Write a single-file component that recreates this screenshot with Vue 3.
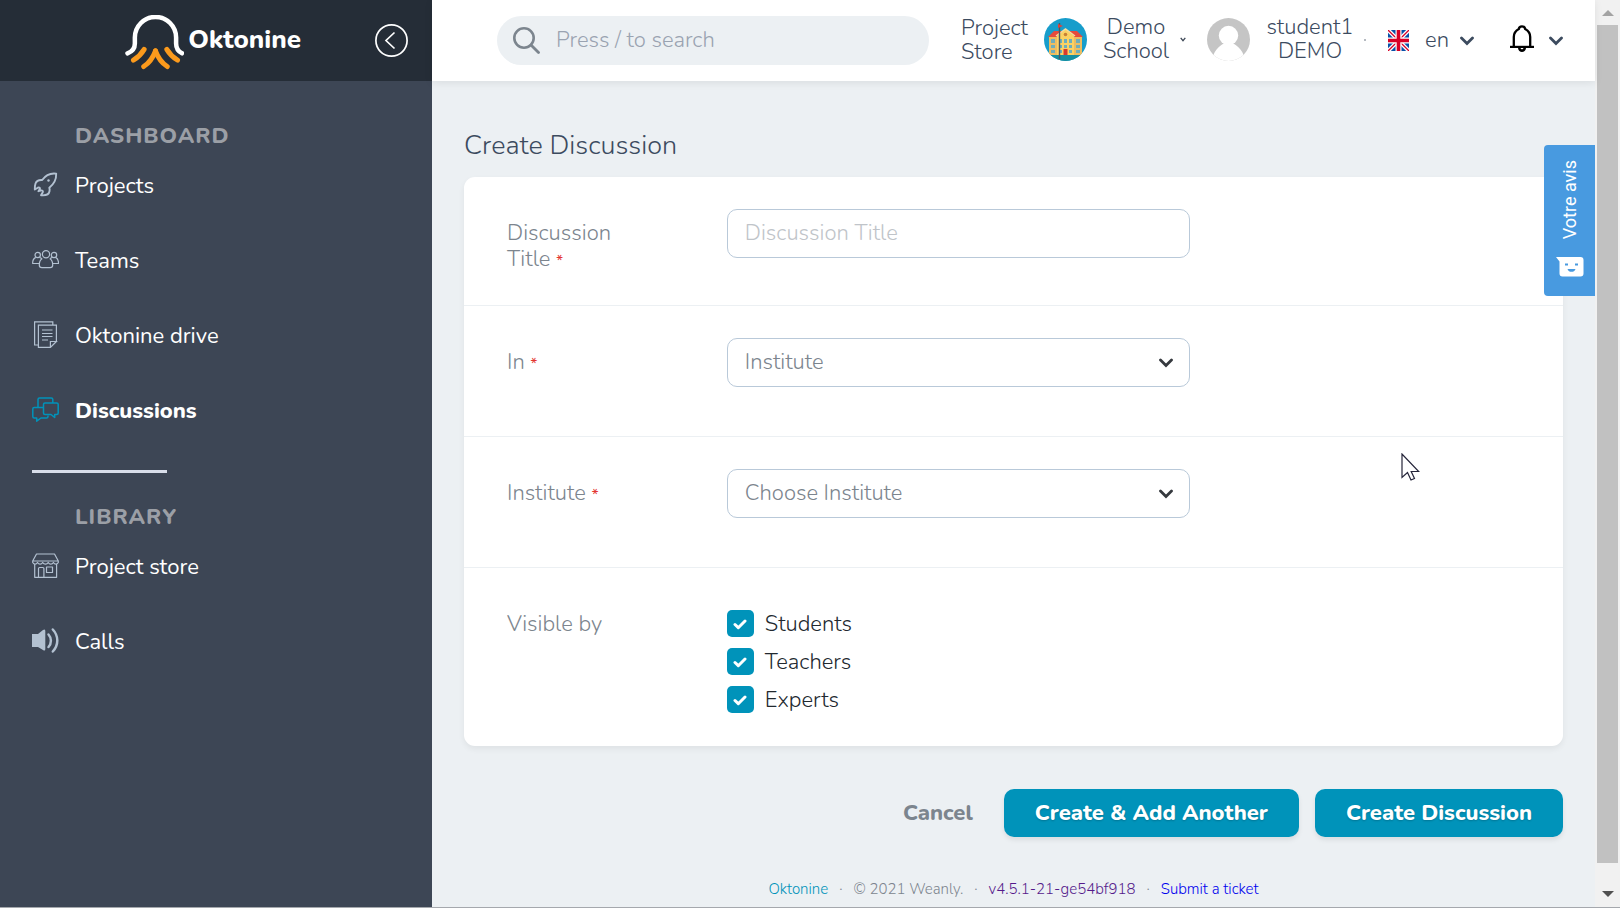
<script setup>
import { ref } from 'vue'

const dashboard = [
  { label: 'Projects', icon: 'rocket' },
  { label: 'Teams', icon: 'team' },
  { label: 'Oktonine drive', icon: 'docs' },
  { label: 'Discussions', icon: 'chat', active: true },
]
const library = [
  { label: 'Project store', icon: 'store' },
  { label: 'Calls', icon: 'sound' },
]
const search = ref('')
const title = ref('')
const scope = ref('Institute')
const institute = ref('')
const audiences = ref([
  { label: 'Students', on: true },
  { label: 'Teachers', on: true },
  { label: 'Experts', on: true },
])
</script>

<template>
  <div class="app">
    <svg class="sprite" aria-hidden="true">
      <symbol id="rocket" viewBox="0 0 27 27">
        <path d="M24.200 2.600c-6-.8-10.500 1.400-14 6.400-4-.3-5.800 1-6.700 3.500-.5 1.500-.8 3.500-.7 6l3-1.800c1.200-.5 2.300-.1 2.200 1.100l-1.600 2.400 2.400-.7c1.400-.4 2.500.5 2 1.700l-1.800 3.100c5 .5 7.900-.8 8.500-4 .3-1.500.2-2.600-.2-3.600C22 13 24.400 8.600 24.200 2.600z" fill="none" stroke="currentColor" stroke-width="1.900" stroke-linejoin="round" />
        <circle cx="16.500" cy="9.500" r="1.200" fill="currentColor" />
      </symbol>
      <symbol id="team" viewBox="0 0 27 27">
        <g fill="none" stroke="currentColor" stroke-width="1.200" stroke-linejoin="round">
          <circle cx="14" cy="8.200" r="3.600" /><circle cx="5.700" cy="9" r="2.700" /><circle cx="22" cy="9" r="2.700" />
          <path d="M10.300 12.600c-2.100 1.200-3 3.400-3 6.400 0 1.700 1 2.600 2.600 2.600h8.200c1.600 0 2.600-.9 2.600-2.600 0-3-.9-5.200-3-6.400M7.300 17.500H.7c-.2-3 .8-5 3.100-6.100M7.700 11.400l2 1.200M20.700 17.500h5.800c.1-3-.8-5-3-6.100M20 11.400l-1.800 1.200" />
        </g>
      </symbol>
      <symbol id="docs" viewBox="0 0 27 27">
        <g fill="none" stroke="currentColor" stroke-width="1.200">
          <path d="M6 24H2.600V.8h18.200v3.400M24.400 20.500V4.200H6.400v22.200h12l6-5.900h-6v5.900" />
          <path d="M10 9h10.500M10 12.500h10.500M10 15.500h10.500M10 19h6" />
        </g>
      </symbol>
      <symbol id="chat" viewBox="0 0 27 27">
        <g fill="none" stroke="currentColor" stroke-width="1.500" stroke-linejoin="round">
          <path d="M6 11V3.500Q6 2 7.500 2h11.800q1.500 0 1.500 1.500V7M11 11.500H2.200Q.8 11.500.8 13v7.500q0 1.500 1.400 1.500h2.500v3.200L9 22h5.500q1.500 0 1.500-1.500v-1" />
          <path d="M13 7h11.700q1.500 0 1.500 1.500v8.500q0 1.500-1.500 1.500h-2v3L19 18.500h-6q-1.500 0-1.500-1.500V8.500Q11.500 7 13 7z" />
        </g>
      </symbol>
      <symbol id="store" viewBox="0 0 27 27">
        <g fill="none" stroke="currentColor" stroke-width="1.200" stroke-linejoin="round">
          <path d="M4.500 2h18l3.800 7H.7zM.7 9v1.500c1.300 2.200 3.500 2.200 4.800 0 1.300 2.200 3.900 2.200 5.200 0 1.300 2.200 4.200 2.200 5.500 0 1.300 2.200 3.900 2.200 5.200 0 1.300 2.200 3.600 2.200 4.900 0V9M2.700 12.300v13h21.900v-13M6.500 25V16.500q0-1 1-1h3.400q1 0 1 1V25M14.500 15h6v5.500h-6z" />
        </g>
      </symbol>
      <symbol id="sound" viewBox="0 0 27 27">
        <path d="M0 7h6L11 3Q13.300 1.500 13.300 4v18q0 2.500-2.300 1L6 20H0z" fill="currentColor" />
        <path d="M16.500 7.500c3.200 3.500 3.200 9 0 12.500M20.800 2.500c6 6.500 6 15.500 0 22" fill="none" stroke="currentColor" stroke-width="2.500" stroke-linecap="round" />
      </symbol>
      <symbol id="chevron" viewBox="0 0 14 10">
        <path d="M1.500 2 7 7.500 12.500 2" fill="none" stroke="currentColor" stroke-width="2.800" stroke-linecap="round" />
      </symbol>
    </svg>

    <aside class="sidebar">
      <div class="brand">
        <a class="logo" href="#">
          <svg width="59" height="55" viewBox="0 0 60 56" aria-hidden="true">
            <path d="M2.500 39C8 37 10 34 10 29V23a21 21 0 0 1 42 0v6c0 5 2 8 6 10" fill="none" stroke="#fff" stroke-width="4.600" stroke-linecap="round" />
            <g fill="none" stroke="#fb9a1c" stroke-width="5" stroke-linecap="round">
              <path d="M19.500 35c-3 5-6 8-11 11" /><path d="M42.500 35c3 5 6 8 11 11" />
              <path d="M31 36.500c-2.500 7-6 12-12 16" /><path d="M31 36.500c2.500 7 6 12 12 16" />
            </g>
          </svg>
          <span>Oktonine</span>
        </a>
        <button class="collapse" aria-label="Collapse menu">
          <svg width="33" height="33" viewBox="0 0 33 33"><circle cx="16.500" cy="16.500" r="15.600" fill="none" stroke="#fff" stroke-width="1.700" /><path d="M19.500 8.500 11 16.500l8.500 8" fill="none" stroke="#fff" stroke-width="1.700" /></svg>
        </button>
      </div>
      <nav>
        <h2>Dashboard</h2>
        <a v-for="item in dashboard" :key="item.label" href="#" :class="{ active: item.active }">
          <svg width="27" height="27"><use :href="'#' + item.icon" /></svg><span>{{ item.label }}</span>
        </a>
        <hr>
        <h2>Library</h2>
        <a v-for="item in library" :key="item.label" href="#">
          <svg width="27" height="27"><use :href="'#' + item.icon" /></svg><span>{{ item.label }}</span>
        </a>
      </nav>
    </aside>

    <div class="page">
      <header>
        <label class="search">
          <svg width="27" height="27" viewBox="0 0 27 27" aria-hidden="true"><circle cx="11" cy="11" r="9.700" fill="none" stroke="#7c858e" stroke-width="2.600" /><path d="m18 18 7.500 7.500" stroke="#7c858e" stroke-width="2.800" stroke-linecap="round" /></svg>
          <input v-model="search" type="search" placeholder="Press / to search" aria-label="Search">
        </label>
        <a class="store-link" href="#">Project Store</a>
        <button class="account school">
          <svg width="43" height="43" viewBox="0 0 43 43" aria-hidden="true">
            <defs><clipPath id="disc"><circle cx="21.500" cy="21.500" r="21.500" /></clipPath></defs>
            <g clip-path="url(#disc)">
              <path d="M0 0h43v43H0z" fill="#179dcb" /><path d="M3 37h37v6H3z" fill="#168fa0" />
              <path d="M4 19 10 13h23l6 6z" fill="#e64b3c" />
              <path d="M5 19h33v18H5z" fill="#edbd61" /><path d="M13 18l8.500-7 8.500 7v19H13z" fill="#fbd263" />
              <path d="m12 18 9.500-7 9.500 7" fill="none" stroke="#f4dda0" stroke-width="1.500" />
              <path d="M7 21h4v4H7zm0 6h4v3H7zm0 5h4v3H7zm8-11h3v4h-3zm5 0h3v4h-3zm5 0h3v4h-3zm7 0h4v4h-4zM15 27h3v3h-3zm5 0h3v3h-3zm5 0h3v3h-3zm7 0h4v3h-4zm-17 5h3v3h-3zm10 0h3v3h-3zm7 0h4v3h-4z" fill="#6faeba" />
              <circle cx="21.500" cy="16.500" r="1.800" fill="#c88135" /><path d="M19.500 31h4v6h-4z" fill="#d53b2f" />
              <path d="M15.500 5v36" stroke="#4b5962" stroke-width="1.400" /><path d="m14 6 5 2-5 2z" fill="#e14237" />
            </g>
          </svg>
          <span>Demo School</span>
          <svg width="6" height="5" viewBox="0 0 6 5"><path d="m.7.900 2.300 2.800L5.300.900" fill="none" stroke="#3c4655" stroke-width="1.300" /></svg>
        </button>
        <button class="account user">
          <svg width="43" height="43" viewBox="0 0 43 43" aria-hidden="true">
            <defs><clipPath id="face"><circle cx="21.500" cy="21.500" r="21.500" /></clipPath></defs>
            <g clip-path="url(#face)"><path d="M0 0h43v43H0z" fill="#c5c5c5" /><circle cx="21.500" cy="17.500" r="9.700" fill="#fff" /><path d="M5 43C6 33 12 28 17.500 25h8C31 28 37 33 38 43z" fill="#fff" /></g>
          </svg>
          <span>student1 DEMO</span>
          <i class="dot"></i>
        </button>
        <button class="lang">
          <svg width="21" height="21" viewBox="0 0 21 21" aria-hidden="true">
            <path d="M0 0h21v21H0z" fill="#0750a8" /><path d="m0 0 21 21M21 0 0 21" stroke="#fff" stroke-width="4" /><path d="m0 0 21 21M21 0 0 21" stroke="#d80027" stroke-width="1.300" />
            <path d="M10.500 0v21M0 10.500h21" stroke="#fff" stroke-width="6" /><path d="M10.500 0v21M0 10.500h21" stroke="#d80027" stroke-width="3.600" />
          </svg>
          <span>en</span>
          <svg width="14" height="10"><use href="#chevron" /></svg>
        </button>
        <button class="alerts" aria-label="Notifications">
          <svg class="bell" width="24" height="28" viewBox="0 0 24 28" aria-hidden="true"><path d="M3.800 21V12C3.800 7 7 5 8.800 4 9 2.200 10.300 1.300 12 1.300s3 .9 3.200 2.700c1.800 1 5 3 5 8v9" fill="none" stroke="#000" stroke-width="2.300" /><path d="M0 20.800h24V23H0z" /><path d="M8 23c.4 5.300 7.600 5.300 8 0h-2.500c-.5 1.700-2.500 1.700-3 0z" /></svg>
          <svg width="14" height="10"><use href="#chevron" /></svg>
        </button>
      </header>

      <main>
        <h1>Create Discussion</h1>
        <form @submit.prevent>
          <div class="card">
            <div class="row">
              <label for="title">Discussion Title <b>*</b></label>
              <div class="field"><input id="title" v-model="title" type="text" placeholder="Discussion Title"></div>
            </div>
            <div class="row tall">
              <label for="scope">In <b>*</b></label>
              <div class="field">
                <select id="scope" v-model="scope"><option>Institute</option></select>
                <svg width="14" height="10"><use href="#chevron" /></svg>
              </div>
            </div>
            <div class="row tall">
              <label for="institute">Institute <b>*</b></label>
              <div class="field">
                <select id="institute" v-model="institute"><option value="">Choose Institute</option></select>
                <svg width="14" height="10"><use href="#chevron" /></svg>
              </div>
            </div>
            <div class="row" role="group" aria-labelledby="visible">
              <span id="visible" class="caption">Visible by</span>
              <div class="checks">
                <label v-for="a in audiences" :key="a.label">
                  <span class="box">
                    <input v-model="a.on" type="checkbox">
                    <svg v-if="a.on" width="14" height="12" viewBox="0 0 14 12"><path d="m2 6.500 3.300 3.200L12 3" fill="none" stroke="#fff" stroke-width="3" stroke-linecap="round" stroke-linejoin="round" /></svg>
                  </span>{{ a.label }}
                </label>
              </div>
            </div>
          </div>
          <div class="actions">
            <button type="button" class="cancel">Cancel</button>
            <button type="button" class="primary">Create &amp; Add Another</button>
            <button type="submit" class="primary">Create Discussion</button>
          </div>
        </form>
        <footer>
          <a class="home" href="#">Oktonine</a><span>·</span><span>© 2021 Weanly.</span><span>·</span><a class="version" href="#">v4.5.1-21-ge54bf918</a><span>·</span><a class="ticket" href="#">Submit a ticket</a>
        </footer>
      </main>

      <button class="feedback">
        <span>Votre avis</span>
        <svg width="28" height="20" viewBox="0 0 28 20" aria-hidden="true"><path d="M0 0h24.500Q27.500 0 27.500 3v13.500q0 3-3 3H6.500q-3 0-3-3V4.500z" fill="#fff" /><path d="M9 6.500h3v2H9zm10 0h3v2h-3zM11.500 12h8c-1 3.800-7 3.800-8 0z" fill="#489ae0" /></svg>
      </button>
    </div>

    <div class="scrollbar" aria-hidden="true">
      <svg width="12" height="6" viewBox="0 0 12 6"><path d="m0 6 6-6 6 6z" fill="#a3a3a3" /></svg>
      <div class="thumb"></div>
      <svg width="12" height="6" viewBox="0 0 12 6"><path d="m0 0 6 6 6-6z" fill="#505050" /></svg>
    </div>

    <svg class="pointer" width="19" height="29" viewBox="0 0 19 29" aria-hidden="true"><path d="M1 1v23.500l5.500-5L10 27l3.500-1.500-3.300-7h7.500z" fill="#fff" stroke="#25253a" stroke-width="1.200" /></svg>
  </div>
</template>

<style>
body { margin: 0; }
</style>

<style scoped>
.app {
  position: relative;
  display: flex;
  min-height: 100vh;
  box-sizing: border-box;
  border-bottom: 1px solid #a5a8ad;
  background: #ecf0f3;
  color: #3c4b5f;
  font: 300 22px/24px Nunito, Lato, "Noto Sans", sans-serif;
}
.app *, .app *::before { box-sizing: border-box; }
.sprite { position: absolute; width: 0; height: 0; }
svg { flex: none; display: block; }
a { color: inherit; text-decoration: none; }
button { padding: 0; border: 0; background: none; color: inherit; font: inherit; cursor: pointer; }
input, select { font: inherit; color: inherit; }

.sidebar { flex: none; width: 432px; background: #3d4655; color: #fff; }
.brand { display: flex; align-items: center; justify-content: flex-end; gap: 74px; height: 81px; padding-right: 24px; background: #252d37; }
.logo { display: flex; align-items: center; gap: 4px; font-size: 26px; font-weight: 800; }
.logo svg { margin-top: 3px; }
.logo span { padding-bottom: 2px; }
nav { padding: 42px 32px 0; }
nav h2 { margin: 0 0 21px 43px; font-size: 22px; line-height: 27px; font-weight: 800; letter-spacing: 1px; text-transform: uppercase; color: #9b9fa6; }
nav a { display: flex; align-items: center; gap: 16px; height: 27px; margin-bottom: 48px; font-weight: 400; }
nav a svg { color: #b3c1d1; }
nav a span { padding-top: 2px; }
nav a.active { font-weight: 800; }
nav a.active svg { color: #0093ba; }
nav hr { width: 135px; height: 3px; margin: -1px 0 31px; border: 0; background: #d9deea; }

.page { position: relative; flex: 1; min-width: 0; }
header { display: flex; align-items: center; height: 81px; padding: 0 32px 0 65px; background: #fff; box-shadow: 0 2px 8px rgba(0, 0, 0, .08); }
.search { display: flex; align-items: center; flex: 1; gap: 16px; min-width: 0; height: 49px; padding: 0 16px; border-radius: 25px; background: #ecf0f3; }
.search input { flex: 1; min-width: 0; padding: 0 0 2px; border: 0; outline: 0; background: none; }
.search input::placeholder { color: #9aa3b1; opacity: 1; }
.store-link { width: 66px; margin-left: 32px; margin-right: 17px; padding-bottom: 2px; }
.account { display: flex; align-items: center; padding-bottom: 2px; }
.account span { padding-bottom: 2px; text-align: center; }
.school span { width: 66px; margin: 0 11px 0 16px; }
.user { margin-left: 21px; }
.user span { width: 88px; margin: 0 10px 0 16px; }
.dot { width: 2px; height: 2px; background: #b5bac1; }
.lang { display: flex; align-items: center; margin-left: 22px; }
.lang span { width: 24px; margin: 0 11px 0 16px; padding-bottom: 2px; }
.alerts { display: flex; align-items: center; gap: 15px; margin-left: 36px; }
.bell { margin-bottom: 4px; }

main { padding: 49px 32px 0; }
h1 { margin: 0 0 15px; font-size: 27px; line-height: 32px; font-weight: 300; }
.card { border-radius: 11px; background: #fff; box-shadow: 0 3px 6px rgba(0, 0, 0, .06); }
.row { display: flex; min-height: 128px; padding: 32px 0; color: #7c858e; line-height: 26px; }
.row + .row { border-top: 1px solid #ecf0f3; }
.row.tall { min-height: 131px; }
.row > label, .caption { flex: none; width: 20%; padding: 11px 43px 0; }
.row b { font-size: 16px; line-height: 16px; font-weight: 400; color: #e3342f; }
.field { position: relative; width: 50%; height: 49px; padding: 0 43px; }
.field input, .field select { width: 100%; height: 49px; padding: 0 17px 2px; border: 1px solid #b9c9d9; border-radius: 10px; outline: 0; background: #fff; appearance: none; }
.field input::placeholder { color: #c0c4c9; opacity: 1; }
.field svg { position: absolute; right: 60px; top: 20px; color: #35393e; pointer-events: none; }
.checks { display: flex; flex-direction: column; gap: 11px; padding: 10px 43px 1px; color: #22292f; line-height: 24px; }
.checks label { display: flex; align-items: center; gap: 11px; height: 27px; }
.box { position: relative; display: flex; align-items: center; justify-content: center; width: 27px; height: 27px; }
.box input { width: 27px; height: 27px; margin: 0; border-radius: 5px; appearance: none; background: #0093ba; }
.box svg { position: absolute; pointer-events: none; }
.actions { display: flex; justify-content: flex-end; gap: 16px; margin-top: 43px; font-weight: 800; }
.actions button { height: 48px; padding: 0 31px 1px; }
.actions .cancel { padding: 0 15px 1px; color: #7c858e; }
.primary { border-radius: 10px; background: #0093ba; color: #fff; text-shadow: 0 1px 2px rgba(0, 0, 0, .2); box-shadow: 0 3px 5px rgba(0, 0, 0, .08); }
footer { display: flex; justify-content: center; gap: 11px; margin-top: 40px; font-size: 15px; color: #7c858e; }
.home { color: #0093ba; }
.version { color: #551a8b; }
.ticket { color: #0000ee; }

.feedback { position: absolute; right: 0; top: 145px; display: flex; flex-direction: column; align-items: center; justify-content: space-between; width: 51px; height: 151px; padding: 15px 0 19px; border-radius: 4px 0 0 4px; background: #489ae0; color: #fff; font: 400 18px/20px Roboto, sans-serif; }
.feedback span { writing-mode: vertical-rl; transform: rotate(180deg); }
.scrollbar { flex: none; display: flex; flex-direction: column; align-items: center; width: 25px; padding: 10px 0; background: #f1f1f1; }
.thumb { flex: 1; width: 21px; margin: 9px 0 28px; background: #c1c1c1; }
.pointer { position: absolute; left: 1401px; top: 453px; pointer-events: none; }
</style>
